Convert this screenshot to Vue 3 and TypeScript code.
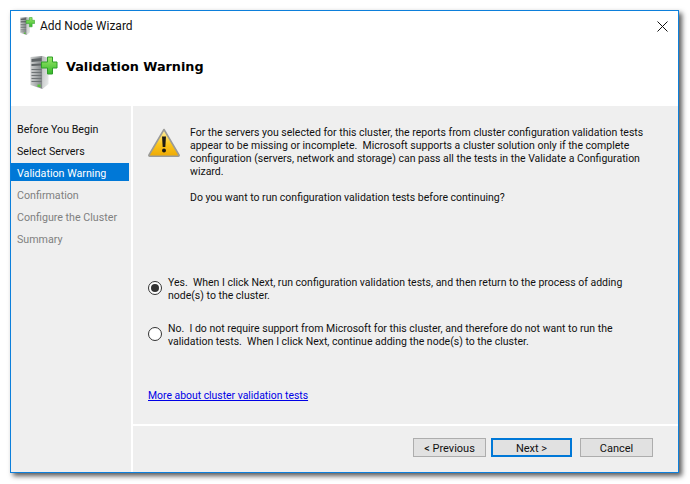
<script setup lang="ts">
const steps = [
  { label: 'Before You Begin', state: 'done' },
  { label: 'Select Servers', state: 'done' },
  { label: 'Validation Warning', state: 'active' },
  { label: 'Confirmation', state: 'off' },
  { label: 'Configure the Cluster', state: 'off' },
  { label: 'Summary', state: 'off' },
]
const intro =
  'For the servers you selected for this cluster, the reports from cluster configuration validation tests\n' +
  'appear to be missing or incomplete.  Microsoft supports a cluster solution only if the complete\n' +
  'configuration (servers, network and storage) can pass all the tests in the Validate a Configuration\n' +
  'wizard.'
const question = 'Do you want to run configuration validation tests before continuing?'
const options = [
  {
    text:
      'Yes.  When I click Next, run configuration validation tests, and then return to the process of adding\n' +
      'node(s) to the cluster.',
    checked: true,
  },
  {
    text:
      'No.  I do not require support from Microsoft for this cluster, and therefore do not want to run the\n' +
      'validation tests.  When I click Next, continue adding the node(s) to the cluster.',
    checked: false,
  },
]
</script>

<template>
  <div class="page">
    <div class="window">
      <div class="titlebar">
        <svg class="icon-small" width="15" height="18" viewBox="0 0 27 33">
          <use href="#server-plus" />
        </svg>
        <span class="title">Add Node Wizard</span>
        <svg class="close" width="11" height="11" viewBox="0 0 11 11">
          <path d="M.5.5l10 10M10.5.5l-10 10" stroke="#111" stroke-width="1" fill="none" />
        </svg>
      </div>
      <div class="header">
        <svg class="icon-large" width="28" height="33" viewBox="0 0 27 33">
          <defs>
            <linearGradient id="front" x1="0" x2="1" y1="0" y2="0">
              <stop offset="0" stop-color="#d0d2d2" />
              <stop offset="1" stop-color="#7d8284" />
            </linearGradient>
            <linearGradient id="side" x1="0" x2="1" y1="0" y2="1">
              <stop offset="0" stop-color="#b9bcbc" />
              <stop offset="1" stop-color="#eceeee" />
            </linearGradient>
            <linearGradient id="plus" x1="0" x2="0" y1="0" y2="1">
              <stop offset="0" stop-color="#9be86a" />
              <stop offset="1" stop-color="#35b82a" />
            </linearGradient>
            <g id="server-plus">
              <path d="M0 1l12-1v33L0 29z" fill="url(#front)" />
              <path d="M12 0l6 2v26l-6 5z" fill="url(#side)" />
              <path d="M1 3l10-1v3L1 6zM1 8l10-.5v2L1 10z" fill="#5f6466" />
              <path d="M1 13h10v1H1zM1 16h10v1H1zM1 19h10v1H1zM1 22h10v1H1zM1 25h10v1H1z" fill="#6e7375" />
              <path d="M7 28.5h3v2.5H7z" fill="#58c23a" />
              <path
                d="M17 1h5v5h4.500v6H22v6h-5v-6h-6V6h6z"
                fill="url(#plus)"
                stroke="#2e9e28"
                stroke-width="1"
              />
            </g>
          </defs>
          <use href="#server-plus" />
        </svg>
        <h1 class="heading">Validation Warning</h1>
      </div>
      <div class="body">
        <nav class="steps">
          <div v-for="s in steps" :key="s.label" class="step" :class="s.state">{{ s.label }}</div>
        </nav>
        <div class="right">
          <main class="content">
            <div class="warning">
              <svg class="warn-icon" width="32" height="29" viewBox="0 0 32 29">
                <defs>
                  <linearGradient id="amber" x1="0" x2="0" y1="0" y2="1">
                    <stop offset="0" stop-color="#fff2a8" />
                    <stop offset=".55" stop-color="#fbc61c" />
                    <stop offset="1" stop-color="#eda905" />
                  </linearGradient>
                </defs>
                <path d="M16 1.500L31 27a.8.8 0 0 1-.7 1.200H1.700A.8.8 0 0 1 1 27z" fill="url(#amber)" stroke="#9b9b98" stroke-width="1.6" stroke-linejoin="round" />
                <path d="M14 8.500h4l-.7 10.500h-2.600z" fill="#1c1a14" />
                <circle cx="16" cy="22.600" r="2" fill="#1c1a14" />
              </svg>
              <div class="message">
                <p class="para">{{ intro }}</p>
                <p class="para question">{{ question }}</p>
              </div>
            </div>
            <div class="options">
              <label v-for="o in options" :key="o.text" class="option">
                <span class="radio" :class="{ checked: o.checked }"></span>
                <span class="para">{{ o.text }}</span>
              </label>
            </div>
            <a class="link" href="#">More about cluster validation tests</a>
          </main>
          <footer class="footer">
            <button class="btn prev">&lt; Previous</button>
            <button class="btn next">Next &gt;</button>
            <button class="btn cancel">Cancel</button>
          </footer>
        </div>
      </div>
    </div>
  </div>
</template>

<style>
html, body { margin: 0; background: #fff; }
</style>

<style scoped>
.page {
  width: 690px;
  height: 484px;
  box-sizing: border-box;
  padding: 10px 0 0 10px;
  font-family: Roboto, "Liberation Sans", sans-serif;
  overflow: hidden;
}
.window {
  width: 669px;
  height: 463px;
  box-sizing: border-box;
  border: 1px solid #0c7fdb;
  background: #fff;
  box-shadow: 3px 3px 5px rgba(0, 0, 0, .65);
  display: flex;
  flex-direction: column;
}
.titlebar {
  height: 30px;
  flex: none;
  display: flex;
  align-items: center;
  padding: 0 10px 0 9px;
}
.icon-small { flex: none; }
.title {
  margin-left: 5px;
  font-size: 12px;
  color: #111;
  flex: 1;
}
.header {
  height: 63px;
  flex: none;
  display: flex;
  align-items: flex-start;
  padding: 15px 0 0 19px;
  box-sizing: border-box;
}
.heading {
  margin: 2px 0 0 8px;
  font-family: "DejaVu Sans", sans-serif;
  font-size: 12.8px;
  line-height: 18px;
  font-weight: 700;
  color: #000;
}
.body {
  flex: 1;
  min-height: 0;
  display: flex;
  margin-top: 2px;
  gap: 2px;
}
.steps {
  width: 120px;
  flex: none;
  background: #efefef;
  padding-top: 13px;
  display: flex;
  flex-direction: column;
  gap: 4px;
  box-sizing: border-box;
}
.step {
  height: 18px;
  line-height: 22px;
  width: 118px;
  padding-left: 6px;
  box-sizing: border-box;
  font-size: 10.7px;
  white-space: nowrap;
  color: #111;
}
.step.active { background: #0078d7; color: #fff; }
.step.off { color: #7f7f7f; }
.right {
  flex: 1;
  min-width: 0;
  display: flex;
  flex-direction: column;
  gap: 2px;
}
.content {
  flex: 1;
  min-height: 0;
  background: #efefef;
  padding: 22px 0 0 15px;
  display: flex;
  flex-direction: column;
}
.warning { display: flex; height: 148px; flex: none; }
.warn-icon { flex: none; }
.message { margin-left: 10px; margin-top: -2px; }
.para {
  margin: 0;
  font-size: 10.5px;
  line-height: 13px;
  color: #111;
  white-space: pre-wrap;
}
.question { margin-top: 13px; }
.options { display: flex; flex-direction: column; gap: 20px; }
.option { display: flex; align-items: center; gap: 6px; }
.radio {
  width: 14px;
  height: 14px;
  flex: none;
  box-sizing: border-box;
  margin-top: -3px;
  border: 1px solid #333;
  border-radius: 50%;
  background: #fff;
  display: flex;
  align-items: center;
  justify-content: center;
}
.radio.checked::after {
  content: "";
  width: 8px;
  height: 8px;
  border-radius: 50%;
  background: #333;
}
.link {
  margin-top: 41px;
  font-size: 10.4px;
  line-height: 13px;
  color: #0000e6;
  text-decoration: underline;
}
.footer {
  height: 46px;
  flex: none;
  background: #efefef;
  box-sizing: border-box;
  padding: 12px 0 0 280px;
  display: flex;
  align-items: flex-start;
}
.btn {
  height: 19px;
  box-sizing: border-box;
  border: 1px solid #adadad;
  background: #e1e1e1;
  padding: 2px 0 0;
  font: 11px/1 Roboto, "Liberation Sans", sans-serif;
  color: #111;
}
.prev { width: 73px; }
.next {
  width: 81px;
  margin-left: 5px;
  border: 2px solid #0078d7;
}
.cancel { width: 73px; margin-left: 8px; }
</style>
